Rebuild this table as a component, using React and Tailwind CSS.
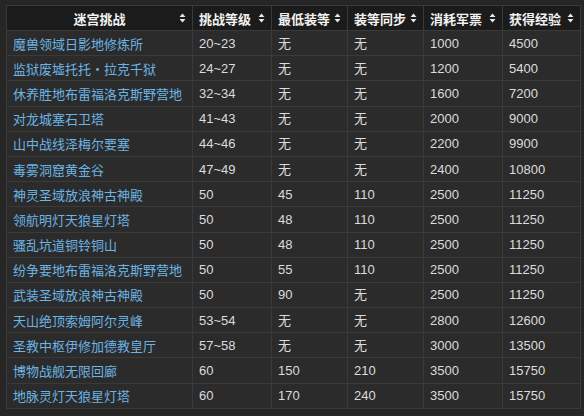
import React from "react";

const rows = [
  ["魔兽领域日影地修炼所", "20~23", "无", "无", "1000", "4500"],
  ["监狱废墟托托·拉克千狱", "24~27", "无", "无", "1200", "5400"],
  ["休养胜地布雷福洛克斯野营地", "32~34", "无", "无", "1600", "7200"],
  ["对龙城塞石卫塔", "41~43", "无", "无", "2000", "9000"],
  ["山中战线泽梅尔要塞", "44~46", "无", "无", "2200", "9900"],
  ["毒雾洞窟黄金谷", "47~49", "无", "无", "2400", "10800"],
  ["神灵圣域放浪神古神殿", "50", "45", "110", "2500", "11250"],
  ["领航明灯天狼星灯塔", "50", "48", "110", "2500", "11250"],
  ["骚乱坑道铜铃铜山", "50", "48", "110", "2500", "11250"],
  ["纷争要地布雷福洛克斯野营地", "50", "55", "110", "2500", "11250"],
  ["武装圣域放浪神古神殿", "50", "90", "无", "2500", "11250"],
  ["天山绝顶索姆阿尔灵峰", "53~54", "无", "无", "2800", "12600"],
  ["圣教中枢伊修加德教皇厅", "57~58", "无", "无", "3000", "13500"],
  ["博物战舰无限回廊", "60", "150", "210", "3500", "15750"],
  ["地脉灵灯天狼星灯塔", "60", "170", "240", "3500", "15750"],
];

const headers = ["迷宫挑战", "挑战等级", "最低装等", "装等同步", "消耗军票", "获得经验"];
const widths = ["w-[186px]", "w-[79px]", "w-[76px]", "w-[76px]", "w-[79px]", "w-[78px]"];

function SortIcon() {
  return (
    <svg width="7" height="10" viewBox="0 0 7 10" className="shrink-0">
      <path d="M3.5 0.5 L6.5 4 L0.5 4 Z" fill="#e8e8e8" />
      <path d="M3.5 9.5 L6.5 6 L0.5 6 Z" fill="#e8e8e8" />
    </svg>
  );
}

export default function App() {
  return (
    <div
      className="w-[584px] h-[416px] bg-[#262626] pl-[6px] pt-[5px]"
      style={{ fontFamily: '"Microsoft YaHei", "Noto Sans CJK SC", sans-serif' }}
    >
      <table className="table-fixed border-collapse border border-[#3a3a3a] w-[574px]">
        <colgroup>
          {widths.map((w, i) => (
            <col key={i} className={w} />
          ))}
        </colgroup>
        <thead>
          <tr className="h-[25px] bg-[#1b1b1b]">
            {headers.map((h, i) => (
              <th key={i} className="border border-[#3a3a3a] px-[6px] p-0 text-[13px] font-bold text-[#f2f2f2]">
                <div className={"flex items-center " + (i === 0 ? "justify-center relative" : "justify-between")}>
                  <span className="leading-none">{h}</span>
                  {i === 0 ? (
                    <span className="absolute right-0 flex items-center"><SortIcon /></span>
                  ) : (
                    <SortIcon />
                  )}
                </div>
              </th>
            ))}
          </tr>
        </thead>
        <tbody>
          {rows.map((r, ri) => (
            <tr key={ri} className="h-[25.2px] bg-[#2b2b2b]">
              {r.map((c, ci) => (
                <td
                  key={ci}
                  className={
                    "border border-[#3a3a3a] px-[6px] py-0 text-[13px] leading-none whitespace-nowrap overflow-hidden " +
                    (ci === 0 ? "text-[#6cb4e4]" : "text-[#dcdcdc]")
                  }
                  style={ci === 0 ? undefined : { fontFamily: '"Liberation Sans", "Noto Sans CJK SC", sans-serif' }}
                >
                  {c}
                </td>
              ))}
            </tr>
          ))}
        </tbody>
      </table>
    </div>
  );
}
